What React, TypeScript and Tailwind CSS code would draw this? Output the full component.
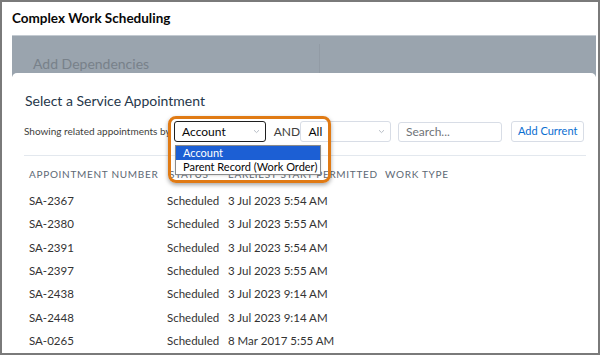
import React from "react";

const rows = [
  ["SA-2367", "Scheduled", "3 Jul 2023 5:54 AM"],
  ["SA-2380", "Scheduled", "3 Jul 2023 5:55 AM"],
  ["SA-2391", "Scheduled", "3 Jul 2023 5:54 AM"],
  ["SA-2397", "Scheduled", "3 Jul 2023 5:55 AM"],
  ["SA-2438", "Scheduled", "3 Jul 2023 9:14 AM"],
  ["SA-2448", "Scheduled", "3 Jul 2023 9:14 AM"],
  ["SA-0265", "Scheduled", "8 Mar 2017 5:55 AM"],
];

const Chevron: React.FC = () => (
  <svg width="7" height="5" viewBox="0 0 7 5" className="shrink-0">
    <path d="M1 1.2 L3.5 3.6 L6 1.2" fill="none" stroke="#b8bec6" strokeWidth="1" />
  </svg>
);

const App: React.FC = () => {
  return (
    <div className="relative w-[600px] h-[355px] overflow-hidden border-2 border-[#7a7a7a] bg-white font-['Lato','Open_Sans',sans-serif] text-[#3e3e3c]">
      {/* title */}
      <div className="h-[33px] pl-[10px] flex items-center text-[13.5px] font-bold text-[#080707]">
        Complex Work Scheduling
      </div>

      {/* greyed tab band behind the modal */}
      <div className="ml-[10px] mr-[2px] h-[42px] flex bg-[#9aa4ae] border-t border-[#c3cad1]">
        <div className="w-[307px] pl-[21px] pt-[17px] text-[14px] text-[#78818a]">Add Dependencies</div>
        <div className="mt-[8px] mb-[4px] border-l border-[#929ba5]" />
      </div>

      {/* modal card */}
      <div className="relative -mt-[4px] ml-[10px] mr-[2px] h-[300px] bg-white rounded-t-[5px] px-[12px]">
        <div className="pt-[19px] pl-[1px] text-[14px] leading-[18px] text-[#26374a]">
          Select a Service Appointment
        </div>

        <div className="mt-[11px] h-[21px] flex items-center">
          <div className="w-[151px] text-[10px] text-[#3e3e3c] whitespace-nowrap">Showing related appointments by</div>
          <div className="w-[92px] h-[21px] flex items-center justify-between pl-[7px] pr-[5px] border border-[#1f1f1f] rounded-[3px] text-[12px] text-[#080707]">
            Account
            <Chevron />
          </div>
          <div className="w-[35px] pl-[8px] text-[12px] text-[#3e3e3c]">AND</div>
          <div className="w-[91px] h-[21px] flex items-center justify-between pl-[7px] pr-[5px] border border-[#d8dde6] rounded-[3px] text-[12px] text-[#080707]">
            All
            <Chevron />
          </div>
          <div className="ml-[7px] w-[105px] h-[20px] flex items-center pl-[7px] border border-[#d8dde6] rounded-[3px] text-[12px] text-[#6f7378]">
            Search...
          </div>
          <div className="ml-[9px] w-[73px] h-[21px] flex items-center justify-center border border-[#d8dde6] rounded-[3px] text-[11px] text-[#0a6ed1]">
            Add Current
          </div>
        </div>

        <div className="mt-[13px] h-px w-[562px] bg-[#e3e8ee]" />

        <div className="pl-[5px]">
          <div className="h-[33px] pt-[3px] grid grid-cols-[138px_61px_157px_1fr] items-center whitespace-nowrap text-[10px] tracking-[0.07em] text-[#5d6874]">
            <div>APPOINTMENT NUMBER</div>
            <div className="pl-[2px]">STATUS</div>
            <div>EARLIEST START PERMITTED</div>
            <div>WORK TYPE</div>
          </div>
          {rows.map((r) => (
            <div key={r[0]} className="h-[23.3px] grid grid-cols-[138px_61px_157px_1fr] items-center whitespace-nowrap text-[11.5px] text-[#333333]">
              <div>{r[0]}</div>
              <div>{r[1]}</div>
              <div>{r[2]}</div>
              <div />
            </div>
          ))}
        </div>
      </div>

      {/* open select list */}
      <div className="absolute left-[173px] top-[143px] w-[146px] border border-[#8a8a8a] bg-white whitespace-nowrap text-[11px] leading-[14px] shadow-sm">
        <div className="bg-[#1c5fd4] text-white pl-[7px]">Account</div>
        <div className="text-[#080707] pl-[7px]">Parent Record (Work Order)</div>
      </div>

      {/* orange callout */}
      <div className="absolute left-[166px] top-[114px] w-[163px] h-[67px] border-[3px] border-[#e07a14] rounded-[8px] shadow-[0_2px_4px_rgba(0,0,0,0.35)]" />
    </div>
  );
};

export default App;
